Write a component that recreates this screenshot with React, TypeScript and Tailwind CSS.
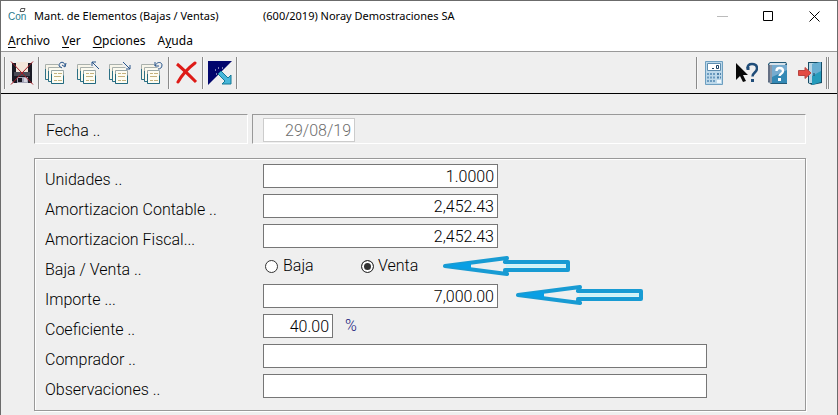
import { useState, type ReactNode } from "react";

const labelText = "block pt-1 text-[16px] leading-6 text-black";
const fieldBox =
  "h-6 border border-[#767676] bg-white px-[3px] text-[16px] leading-5 text-black outline-none";

function Separator() {
  return <div className="h-8 w-[2px] border-l border-[#8a8a8a] bg-[#f8f8f8]" />;
}

function ToolButton({ label, children }: { label: string; children: ReactNode }) {
  return (
    <button type="button" aria-label={label} className="flex h-8 w-8 items-center justify-center">
      <svg width="24" height="24" viewBox="0 0 24 24" fill="none" aria-hidden="true">
        {children}
      </svg>
    </button>
  );
}

function SaveIcon() {
  return (
    <>
      <path d="M2 2h20v20H4l-2-2z" fill="#1a1a24" />
      <path d="M6 1h12v10H6z" fill="#f3e6da" />
      <path d="M4 11h16v4H4z" fill="#4a4a55" />
      <path d="M7 16h11v6H7z" fill="#a5a5b8" />
      <path d="M8 17h4v4H8z" fill="#151520" />
      <path d="M14 17h3v4h-3z" fill="#d4d4df" />
      <path d="M1 .5l22 23M23 .5L1 23.500" stroke="#a51c26" strokeWidth="1" />
    </>
  );
}

function PagesIcon({ children }: { children: ReactNode }) {
  return (
    <>
      <path d="M1.500 3.500h13v15h-13z" fill="#f7f5ea" />
      <path d="M1.500 18.500v-15h13" stroke="#a9b0ac" />
      <path d="M1.500 8v10.500h3" stroke="#2d7186" />
      <path d="M4.500 6.500h13v14h-13z" fill="#fbfaf0" />
      <path d="M4.500 20.500v-14h13" stroke="#a9b0ac" />
      <path d="M4.500 10v10.500h3" stroke="#2d7186" />
      <path d="M7.500 9.500h12v13h-12z" fill="#fdfcf3" stroke="#9aa7a7" />
      <path d="M7.500 13v9.500h12v-8" stroke="#226a80" />
      <path d="M10 12.500h3M14 12.500h4M10 15.500h7M10 19.500h3M14 19.500h4" stroke="#c4b27d" />
      {children}
    </>
  );
}

function CalculatorIcon() {
  return (
    <>
      <path d="M3.500.5h17v23h-17z" fill="#bcd8ea" stroke="#6d9fc0" />
      <path d="M5.500 2.500h13v7h-13z" fill="#fff" stroke="#5d8cae" />
      <path d="M10 7.500h2M14.500 4.500h2v3h-2z" stroke="#1d4264" />
      <path d="M5 13h9M5 16.500h9M5 20h9" stroke="#6c9cc0" strokeWidth="2" strokeDasharray="2 1" />
      <path d="M15 13h4M15 16.500h4" stroke="#4f82ab" strokeWidth="2" strokeDasharray="2 1" />
      <path d="M15 19h4v3h-4z" fill="#eef7fc" />
    </>
  );
}

function ContextHelpIcon() {
  return (
    <>
      <path d="M2 2v17l4-4 3 6 3-1-3-6h5z" fill="#080808" />
      <path
        d="M13.500 7.500C13.500 4 15 3 18 3c3.500 0 5 2 5 4.500 0 4-4.500 4-4.500 8"
        stroke="#204d79"
        strokeWidth="2.500"
      />
      <path d="M12.500 6h3v3h-3zM17 18h3v3h-3z" fill="#204d79" />
    </>
  );
}

function ManualIcon() {
  return (
    <>
      <path d="M2 3l2-2h16l1 2v20H5l-3-2z" fill="#225976" />
      <path d="M4 2h16l-1 2H3z" fill="#d7e2ea" />
      <path d="M2 4h4v18H3l-1-2z" fill="#8d98a8" />
      <path d="M6 4h15v18H6z" fill="#76abcf" />
      <path d="M6 16L21 9v13H6z" fill="#3489b5" />
      <path d="M3 4v17" stroke="#3c4861" />
      <path d="M10.500 10c0-2 1-3 3-3s3.500 1 3.500 3c0 3-3.500 2.500-3.500 5" stroke="#fff" strokeWidth="2.300" />
      <path d="M12 17h3v3h-3z" fill="#fff" />
    </>
  );
}

function ExitIcon() {
  return (
    <>
      <path d="M10 1h14v21l-10 2-4-2z" fill="#164d66" />
      <path d="M11 2h8v20h-8z" fill="#b9d6e5" />
      <path d="M14 3l9-2v20l-9 3z" fill="#249bbb" />
      <path d="M14 3l9-2v9l-9 5z" fill="#68aed1" />
      <path d="M16 12v3" stroke="#16455f" />
      <path d="M.5 9.500H7V6.500l6 5.500-6 5.500v-3H.500z" fill="#e34b43" stroke="#b8433f" />
    </>
  );
}

function Arrow({ className }: { className: string }) {
  return (
    <svg className={className} width="129" height="22" viewBox="0 0 129 22" fill="none" aria-hidden="true">
      <path
        d="M2 11L64 3L62 7H125V15H62L64 19Z"
        fill="#efefef"
        stroke="#189bd3"
        strokeWidth="4"
        strokeLinejoin="round"
      />
      <path d="M63 11h60" stroke="#c9f5fb" strokeWidth="3" />
      <path d="M2 11l26-4v8z" fill="#089fe5" />
    </svg>
  );
}

function FormRow({ id, label, children }: { id: string; label: string; children: ReactNode }) {
  return (
    <div className="flex h-6 items-start">
      <label htmlFor={id} className={`${labelText} w-[218px] shrink-0 whitespace-nowrap`}>
        {label}
      </label>
      {children}
    </div>
  );
}

const menus = [
  { before: "", key: "A", after: "rchivo" },
  { before: "", key: "V", after: "er" },
  { before: "", key: "O", after: "pciones" },
  { before: "A", key: "y", after: "uda" },
];

const radioStyle =
  "h-[13px] w-[13px] shrink-0 appearance-none rounded-full border border-[#333] bg-white checked:bg-[#333] checked:shadow-[inset_0_0_0_2px_white]";

export default function App() {
  const [kind, setKind] = useState("venta");
  return (
    <div className="flex min-h-screen flex-col border-x border-t border-[#6b6b6b] bg-[#efefef] font-[Roboto,'Liberation_Sans',sans-serif] font-light">
      <header className="bg-white font-['Noto_Sans','Segoe_UI',sans-serif] text-[12px] font-normal text-black">
        <div className="flex h-[30px] items-center text-[11px]">
          <svg className="ml-[7px] shrink-0" width="19" height="20" viewBox="0 0 19 20" aria-hidden="true">
            <text x="0" y="14" fontSize="10" fill="#287b8e" fontFamily="Liberation Sans">
              Con
            </text>
            <path d="M13 2.500h4l-1 3h-4z" fill="#fff" stroke="#555" />
          </svg>
          <h1 className="ml-[7px] w-[229px] whitespace-nowrap">Mant. de Elementos (Bajas / Ventas)</h1>
          <span className="whitespace-nowrap">(600/2019) Noray Demostraciones SA</span>
          <div className="ml-auto flex">
            <button type="button" aria-label="Minimizar" disabled className="flex h-[30px] w-[46px] items-center justify-center">
              <svg width="11" height="11" viewBox="0 0 11 11"><path d="M0 5.500h11" stroke="#bbb" /></svg>
            </button>
            <button type="button" aria-label="Maximizar" className="flex h-[30px] w-[46px] items-center justify-center">
              <svg width="10" height="10" viewBox="0 0 10 10"><path d="M.5.5h9v9h-9z" fill="none" stroke="#000" /></svg>
            </button>
            <button type="button" aria-label="Cerrar" className="flex h-[30px] w-[46px] items-center justify-center">
              <svg width="11" height="11" viewBox="0 0 11 11"><path d="M.5.5l10 10M10.500.5l-10 10" stroke="#000" /></svg>
            </button>
          </div>
        </div>
        <nav className="flex h-5 items-center gap-3 pl-[7px]">
          {menus.map((m) => (
            <button key={m.after} type="button" className="leading-5">
              {m.before}
              <span className="underline underline-offset-2">{m.key}</span>
              {m.after}
            </button>
          ))}
        </nav>
      </header>

      <div role="toolbar" className="flex h-[43px] items-center border-t border-b border-t-[#999] border-b-black pr-[7px] pl-[3px]">
        <Separator />
        <ToolButton label="Guardar"><SaveIcon /></ToolButton>
        <Separator />
        <ToolButton label="Primero">
          <PagesIcon><path d="M15 5c0-5 6-5 6 0M18 4l3 2 1-4M15 5l3 2" stroke="#28558a" /></PagesIcon>
        </ToolButton>
        <ToolButton label="Anterior">
          <PagesIcon><path d="M23 8l-7-7M16 5V1h4" stroke="#28558a" /></PagesIcon>
        </ToolButton>
        <ToolButton label="Siguiente">
          <PagesIcon><path d="M15 1l7 7M18 8h4V4" stroke="#28558a" /></PagesIcon>
        </ToolButton>
        <ToolButton label="Ultimo">
          <PagesIcon><path d="M15 1v4h4M15 5c2-5 7-4 7-1 0 3-2 4-4 4" stroke="#28558a" /></PagesIcon>
        </ToolButton>
        <Separator />
        <ToolButton label="Borrar">
          <path d="M3 3c6 5 12 11 19 18" stroke="#de1b17" strokeWidth="3" />
          <path d="M21 2C13 8 8 14 4 21" stroke="#de1b17" strokeWidth="3" strokeLinecap="round" />
        </ToolButton>
        <Separator />
        <ToolButton label="Procesar">
          <path d="M0 0h24L0 24z" fill="#02066d" />
          <path d="M7 9h1M10 7h1M14 7h1M8 13h1M16 9h1" stroke="#fff" />
          <path d="M10 13l3-3 7 7 3-3v9h-9l3-3z" fill="#47b7da" stroke="#147996" />
        </ToolButton>
        <Separator />
        <div className="ml-auto flex items-center">
          <Separator />
          <ToolButton label="Calculadora"><CalculatorIcon /></ToolButton>
          <ToolButton label="Ayuda contextual"><ContextHelpIcon /></ToolButton>
          <ToolButton label="Manual"><ManualIcon /></ToolButton>
          <ToolButton label="Salir"><ExitIcon /></ToolButton>
          <Separator />
          <Separator />
        </div>
      </div>

      <main className="pt-5 pr-[31px] pb-1 pl-[33px]">
        <div className="flex gap-1">
          <div className="h-[30px] w-[214px] border border-[#999] border-r-white border-b-white pl-[11px]">
            <label htmlFor="fecha" className={labelText}>Fecha ..</label>
          </div>
          <div className="h-[30px] flex-1 border border-[#999] border-r-white border-b-white pt-[3px] pl-[10px]">
            <input
              id="fecha"
              disabled
              defaultValue="29/08/19"
              className="block h-6 w-[92px] border border-[#ccc] bg-white px-[3px] text-right text-[16px] leading-5 text-[#6d6d6d]"
            />
          </div>
        </div>

        <form className="mt-[14px] flex flex-col gap-[6px] border border-[#999] pt-[5px] pb-3 pl-[10px] shadow-[1px_1px_0_white,inset_1px_1px_0_white]">
          <FormRow id="unidades" label="Unidades ..">
            <input id="unidades" defaultValue="1.0000" className={`${fieldBox} w-[235px] text-right`} />
          </FormRow>
          <FormRow id="contable" label="Amortizacion Contable ..">
            <input id="contable" defaultValue="2,452.43" className={`${fieldBox} w-[235px] text-right`} />
          </FormRow>
          <FormRow id="fiscal" label="Amortizacion Fiscal...">
            <input id="fiscal" defaultValue="2,452.43" className={`${fieldBox} w-[235px] text-right`} />
          </FormRow>
          <FormRow id="venta" label="Baja / Venta ..">
            <div className="flex h-6 items-center pl-[2px] text-[16px]">
              <label className="flex w-24 items-center gap-[5px]">
                <input type="radio" name="kind" value="baja" checked={kind === "baja"} onChange={() => setKind("baja")} className={radioStyle} />
                Baja
              </label>
              <label className="flex w-[82px] items-center gap-1">
                <input id="venta" type="radio" name="kind" value="venta" checked={kind === "venta"} onChange={() => setKind("venta")} className={radioStyle} />
                Venta
              </label>
              <Arrow className="shrink-0" />
            </div>
          </FormRow>
          <FormRow id="importe" label="Importe ...">
            <input id="importe" defaultValue="7,000.00" className={`${fieldBox} w-[235px] text-right`} />
            <Arrow className="ml-[18px] shrink-0" />
          </FormRow>
          <FormRow id="coeficiente" label="Coeficiente ..">
            <input id="coeficiente" defaultValue="40.00" className={`${fieldBox} w-[70px] text-right`} />
            <span className="ml-3 text-[16px] leading-6 text-[#15157a]">%</span>
          </FormRow>
          <FormRow id="comprador" label="Comprador ..">
            <input id="comprador" className={`${fieldBox} w-[444px]`} />
          </FormRow>
          <FormRow id="observaciones" label="Observaciones ..">
            <input id="observaciones" className={`${fieldBox} w-[444px]`} />
          </FormRow>
        </form>
      </main>
    </div>
  );
}
